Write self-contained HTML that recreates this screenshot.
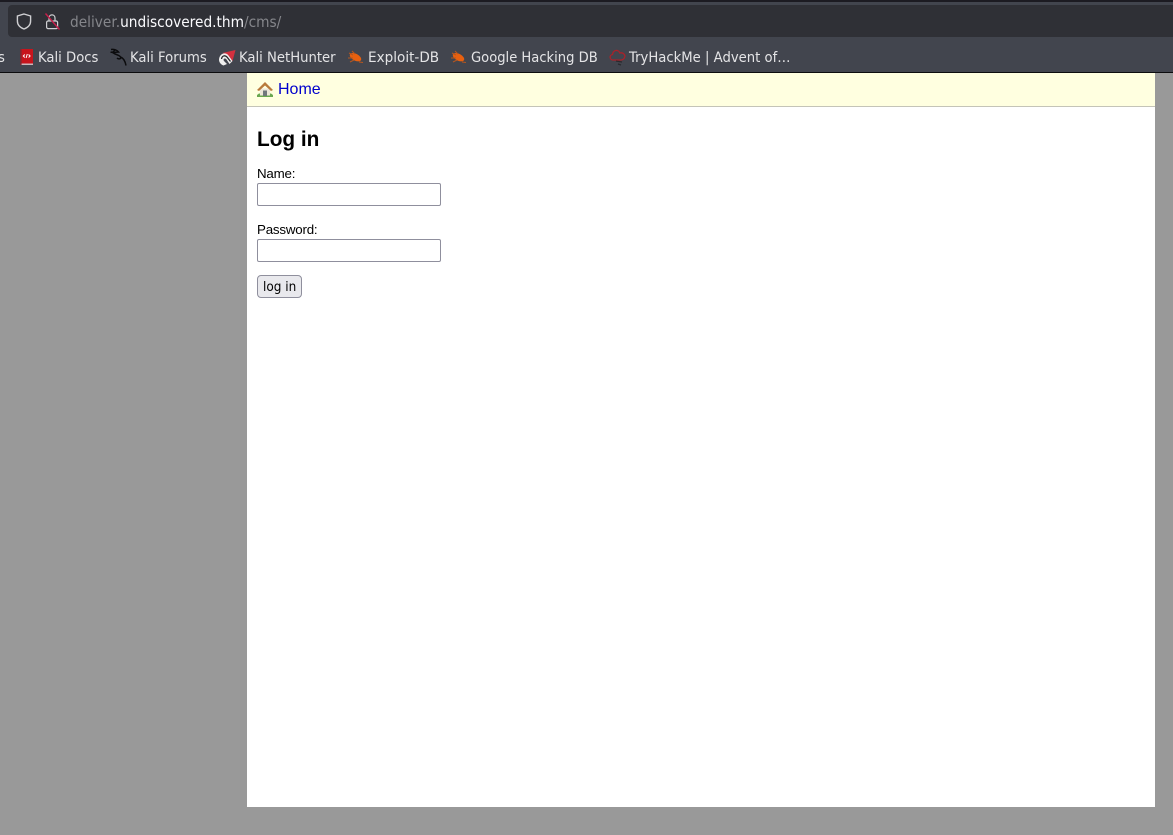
<!DOCTYPE html>
<html>
<head>
<meta charset="utf-8">
<style>
html,body{margin:0;padding:0;width:1173px;height:835px;overflow:hidden;background:#999;font-family:"Liberation Sans",sans-serif}
.a{position:absolute;white-space:nowrap}
svg.a{overflow:visible}
.t{font-family:"DejaVu Sans",sans-serif;font-size:14px;color:#e4e4e6;line-height:18px;top:49px;transform-origin:0 50%;transform:scaleX(.943)}
.u{font-family:"DejaVu Sans",sans-serif;font-size:15px;line-height:20px;top:12px;color:#85868b;transform-origin:0 50%;transform:scaleX(.915)}
input{position:absolute;box-sizing:border-box;left:257px;width:184px;height:23px;border:1px solid #8f8f9d;border-radius:2px;background:#fff;margin:0;padding:0}
</style>
</head>
<body>
<div class="a" style="left:0;top:0;width:1173px;height:2px;background:#1c1b22"></div>
<div class="a" style="left:0;top:2px;width:1173px;height:35px;background:#42454e"></div>
<div class="a" style="left:8px;top:5px;width:1165px;height:32px;background:#2f3036;border-radius:4px 0 0 4px"></div>
<div class="a" style="left:0;top:37px;width:1173px;height:35px;background:#42454e"></div>
<div class="a" style="left:0;top:72px;width:1173px;height:1px;background:#0c0c0e"></div>

<svg class="a" style="left:16px;top:13px" width="16" height="17" viewBox="0 0 16 17"><path d="M8 1 L14.6 3 V8 C14.6 12 11.5 14.7 8 16 C4.5 14.7 1.4 12 1.4 8 V3 Z" fill="none" stroke="#cfcfd2" stroke-width="1.4"/></svg>
<svg class="a" style="left:45px;top:13px" width="15" height="17" viewBox="0 0 15 17"><path d="M4 8 V5 C4 0.8 10 0.8 10 5 V8" fill="none" stroke="#cfcfd2" stroke-width="1.2"/><rect x="1.6" y="8" width="11" height="7.6" rx="1.5" fill="none" stroke="#cfcfd2" stroke-width="1.2"/><path d="M0.5 0.5 L14.5 16.5" stroke="#c81e4a" stroke-width="1.4"/></svg>

<div class="a u" style="left:70px" id="url">deliver.<span style="color:#fbfbfe">undiscovered.thm</span>/cms/</div>

<div class="a t" style="left:-1px;width:7px;overflow:hidden;text-indent:-1px">s</div>

<svg class="a" style="left:20px;top:49px" width="13" height="16" viewBox="0 0 13 16"><rect x="0" y="0" width="13" height="14.5" fill="#c8141c"/><rect x="0" y="14.5" width="13" height="1.5" fill="#c9b8bc"/><rect x="0" y="0" width="1.6" height="16" fill="#7d2a32"/><path d="M4.8 5.5 L3.3 7 L4.8 8.5 M8.6 5.5 L10.1 7 L8.6 8.5 M7.3 5 L6.1 9" fill="none" stroke="#fff" stroke-width="1"/></svg>
<div class="a t" style="left:38px">Kali Docs</div>

<svg class="a" style="left:110px;top:49px" width="17" height="17" viewBox="0 0 17 17"><path d="M1 0.5 C4 0 7 1 8.5 3 C6.5 3 5 3 3.5 4 C6 6 9.5 6 10.5 8 C11.5 10 8.5 10.5 7 9 M3.5 4 C2.5 3 1.5 3 0.5 3.5 M10.5 8 C13 9 15 11 16 16.5 M5 1 L2 4" fill="none" stroke="#0b0b0d" stroke-width="1.5"/></svg>
<div class="a t" style="left:130px">Kali Forums</div>

<svg class="a" style="left:219px;top:50px" width="17" height="16" viewBox="0 0 17 16"><path d="M3.5 3 L16.5 0 L13.5 11 L8 5 Z" fill="#d3303f"/><path d="M0 9.5 C0.5 3.5 6.5 1.5 9.5 5.5 L13.5 11 L10.5 14 L7.5 9.5 C6 7.5 3.5 9 5 11 L8 14 L4.5 15.5 C2 14.5 0 12.5 0 9.5 Z" fill="#efefef"/><path d="M2.5 9 C3 5.5 6 5 8 7 L11.5 11.5" fill="none" stroke="#26262a" stroke-width="1.3"/></svg>
<div class="a t" style="left:239px">Kali NetHunter</div>

<svg class="a" style="left:348px;top:50px;filter:blur(.35px)" width="16" height="14" viewBox="0 0 16 14"><ellipse cx="7.5" cy="7.2" rx="6.2" ry="3.4" transform="rotate(28 7.5 7.2)" fill="#e8600f"/><path d="M1 3 L5 5 M4 1 L7 4 M0 8 L5 8 M2 12 L6 10 M11 12 L15 12.5" stroke="#b5561f" stroke-width="1"/></svg>
<div class="a t" style="left:368px;transform:scaleX(.97)">Exploit-DB</div>

<svg class="a" style="left:451px;top:50px;filter:blur(.35px)" width="16" height="14" viewBox="0 0 16 14"><ellipse cx="7.5" cy="7.2" rx="6.2" ry="3.4" transform="rotate(28 7.5 7.2)" fill="#e8600f"/><path d="M1 3 L5 5 M4 1 L7 4 M0 8 L5 8 M2 12 L6 10 M11 12 L15 12.5" stroke="#b5561f" stroke-width="1"/></svg>
<div class="a t" style="left:471px;transform:scaleX(.937)">Google Hacking DB</div>

<svg class="a" style="left:609px;top:49px" width="17" height="17" viewBox="0 0 17 17"><path d="M4 11 C0.5 11 0 6 3.5 5.5 C4 0.8 9.5 0 10.8 4 C14.5 3 17 6.5 15.3 9 C14.5 10.5 13 11 11.5 11 Z" fill="none" stroke="#a8222a" stroke-width="1.3"/><path d="M7 12 L13 13 M9 15 L12 16" stroke="#2a2a2e" stroke-width="1.2"/></svg>
<div class="a t" style="left:629px">TryHackMe | Advent of…</div>

<div class="a" style="left:247px;top:73px;width:908px;height:734px;background:#fff"></div>
<div class="a" style="left:247px;top:73px;width:908px;height:33px;background:#ffffe0"></div>
<div class="a" style="left:247px;top:106px;width:908px;height:1px;background:#c4c4b8"></div>

<svg class="a" style="left:257px;top:82px" width="16" height="15" viewBox="0 0 16 15"><path d="M0 15 V13 L2 11.5 H14 L16 13 V15 Z" fill="#6aa84f"/><rect x="3" y="6.5" width="10" height="7" fill="#ece6d8"/><rect x="6" y="8.5" width="4" height="5.5" fill="#70767c"/><path d="M0 8 L8 0 L16 8 L14 9 L8 3.5 L2 9 Z" fill="#b97a3c"/></svg>
<div class="a" style="left:278px;top:81px;font-size:16px;line-height:18px;color:#0000cc">Home</div>

<div class="a" style="left:257px;top:127px;font-size:20.8px;line-height:26px;font-weight:bold;color:#000">Log in</div>
<div class="a" style="left:257px;top:166px;font-size:13.33px;line-height:15px;color:#000;letter-spacing:-.2px">Name:</div>
<input type="text" style="top:183px">
<div class="a" style="left:257px;top:222px;font-size:13.33px;line-height:15px;color:#000;letter-spacing:-.2px">Password:</div>
<input type="password" style="top:239px">
<div class="a" style="left:257px;top:275px;box-sizing:border-box;width:45px;height:23px;border:1px solid #8f8f9d;border-radius:4px;background:#e9e9ed"></div>
<div class="a" style="left:263px;top:279px;font-family:'DejaVu Sans',sans-serif;font-size:13px;line-height:18px;color:#000;transform-origin:0 50%;transform:scaleX(.93)">log in</div>
</body>
</html>
